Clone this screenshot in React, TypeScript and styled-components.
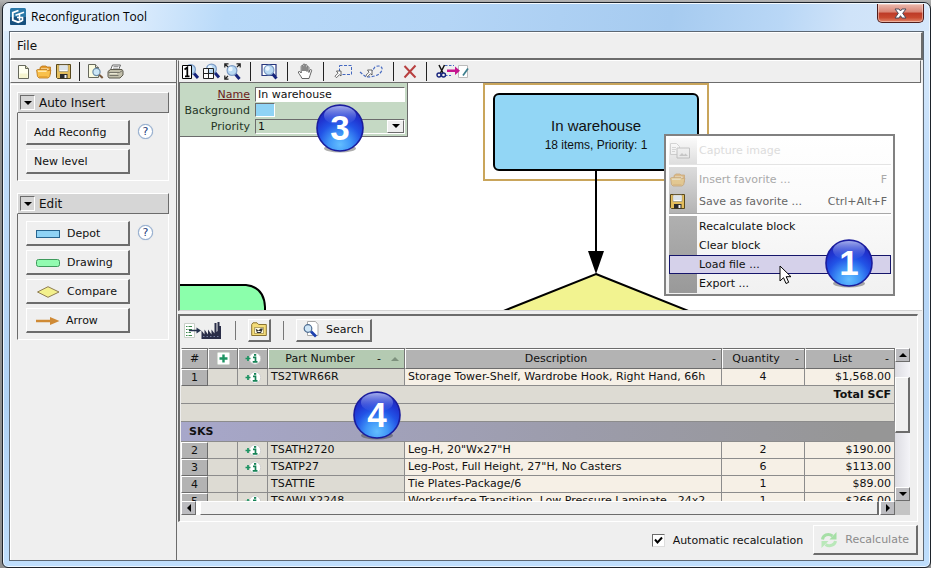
import React, { useState } from "react";
import styled, { createGlobalStyle, css } from "styled-components";

const GlobalStyle = createGlobalStyle`
  *, *::before, *::after { box-sizing: border-box; }
  body {
    margin: 0;
    background: #9c9c9c;
    font-family: "DejaVu Sans", Verdana, sans-serif;
    font-size: 11px;
    line-height: 14px;
    color: #111;
  }
  button, input, select { font: inherit; color: inherit; margin: 0; }
  svg { display: block; flex: none; }
`;

const dark = "#6c6c6c";

const raised = css`
  border: 1px solid;
  border-color: #fff ${dark} ${dark} #fff;
`;

/* ---------- window frame ---------- */

const Desktop = styled.div`
  min-height: 100vh;
  padding: 2px 0 0 2px;
  display: flex;
  background: linear-gradient(#b4b4b4, #8e8e8e 8px);
`;

const Window = styled.main`
  flex: 1;
  min-width: 0;
  display: flex;
  flex-direction: column;
  border: 1px solid #1d232b;
  border-radius: 7px 7px 6px 6px;
  background: linear-gradient(#e2effc 0, #bfdcfa 160px, #b0d2f5 400px, #bfdefc 100%);
  box-shadow: inset 0 0 0 1px #edf6ff;
  padding: 0 6px 6px;
`;

const TitleBar = styled.header`
  display: flex;
  align-items: flex-start;
  justify-content: space-between;
  height: 28px;
  margin: 0 -5px;
  padding: 0 5px 0 6px;
  border-top: 1px solid #f4faff;
  border-radius: 6px 6px 0 0;
  background: linear-gradient(100deg, #eaf4fe 0, #dcecfd 14%, #b9daf9 24%, #b4d5f6 48%, #a6cbf0 72%, #b9d7f6 84%, #cfe3f9 91%, #d5e7fb 100%);
`;

const Title = styled.h1`
  display: flex;
  align-items: center;
  gap: 5px;
  margin: 0;
  height: 25px;
  font-family: "Open Sans", "Noto Sans", sans-serif;
  font-size: 12px;
  line-height: 16px;
  font-weight: 400;
  color: #000;
`;

const CloseButton = styled.button`
  width: 47px;
  height: 19px;
  padding: 0;
  display: grid;
  place-items: center;
  border: 1px solid #4f1d1c;
  border-top: 0;
  border-radius: 0 0 5px 5px;
  background: linear-gradient(#eab9ae 0, #d98474 45%, #bd3a27 50%, #c8492f 75%, #e2876b 100%);
  box-shadow: inset 0 0 0 1px rgba(255, 225, 215, 0.5);
`;

const Client = styled.div`
  flex: 1;
  display: flex;
  flex-direction: column;
  border: 1px solid #5c6773;
  background: #efefef;
`;

const MenuBar = styled.nav`
  display: flex;
  align-items: center;
  height: 28px;
  border: 1px solid #fff;
  border-right: 2px solid ${dark};
  border-bottom: 2px solid ${dark};
`;

const MenuButton = styled.button`
  padding: 2px 6px;
  border: 0;
  background: none;
  font-size: 12px;
`;

const Columns = styled.div`
  flex: 1;
  display: flex;
`;

/* ---------- tool bars ---------- */

const ToolBar = styled.div`
  display: flex;
  align-items: center;
  gap: 4px;
  height: 23px;
  padding: 0 3px;
  ${raised}
`;

const ToolButton = styled.button<{ $width?: number }>`
  width: ${(p) => p.$width ?? 17}px;
  height: 19px;
  padding: 0;
  display: grid;
  place-items: center;
  border: 0;
  background: none;
`;

const Divider = styled.span<{ $tone?: string }>`
  width: 1px;
  height: 19px;
  margin: 0 5px;
  background: ${(p) => p.$tone ?? "#222"};
`;

/* ---------- left palette ---------- */

const Palette = styled.aside`
  width: 167px;
  flex: none;
  display: flex;
  flex-direction: column;
  border-right: 1px solid ${dark};
`;

const PaletteTools = styled(ToolBar)`
  gap: 3px;
  padding: 0 4px;
  border-right: 0;

  ${Divider} {
    margin: 0 4px;
  }
`;

const PaletteBody = styled.div`
  flex: 1;
  display: flex;
  flex-direction: column;
  gap: 12px;
  margin-top: 1px;
  padding: 7px 7px 0 6px;
  border-top: 1px solid #fff;
  border-left: 1px solid #fff;
`;

const GroupHeader = styled.div`
  display: flex;
  align-items: center;
  gap: 4px;
  height: 21px;
  padding: 0 2px;
  background: #d6d6d6;
  ${raised}
`;

const Disclosure = styled.button`
  width: 15px;
  height: 15px;
  padding: 0;
  display: grid;
  place-items: center;
  border: 1px solid;
  border-color: ${dark} #fff #fff ${dark};
  background: #d6d6d6;
`;

const GroupTitle = styled.h2`
  margin: 0;
  font-size: 12px;
  line-height: 16px;
  font-weight: 400;
`;

const GroupBody = styled.div`
  display: flex;
  align-items: flex-start;
  gap: 8px;
  padding: 7px 0 6px 8px;
  border: 1px solid;
  border-color: transparent #fff #fff ${dark};
  border-top: 0;
`;

const ButtonStack = styled.div`
  width: 104px;
  display: flex;
  flex-direction: column;
  gap: 4px;
`;

const PaletteButton = styled.button<{ $indent?: number }>`
  display: flex;
  align-items: center;
  gap: 6px;
  height: 25px;
  padding: 2px 0 0 ${(p) => p.$indent ?? 7}px;
  border: 1px solid;
  border-width: 1px 2px 2px 1px;
  border-color: #fff ${dark} ${dark} #fff;
  background: #efefef;
  white-space: nowrap;
`;

const HelpButton = styled.button`
  width: 15px;
  height: 15px;
  margin-top: 4px;
  padding: 0;
  border: 1px solid #8fa9cb;
  border-radius: 50%;
  background: #fff;
  box-shadow: 0 0 1px #9db4d2;
  font-size: 11px;
  line-height: 12px;
  color: #1c3d7a;
`;

/* ---------- right side ---------- */

const Workspace = styled.section`
  flex: 1;
  min-width: 0;
  display: flex;
  flex-direction: column;
  padding-left: 1px;
`;

const CanvasTools = styled(ToolBar)`
  margin-right: 2px;
  border-left: 1px solid ${dark};
`;

const Canvas = styled.div`
  position: relative;
  flex: 1;
  min-height: 227px;
  margin-right: 1px;
  overflow: hidden;
  border-left: 2px solid ${dark};
  border-bottom: 1px solid #d4d4d4;
  background: #fff;
`;

const Drawing = styled.svg`
  position: absolute;
  left: 0;
  top: 0;
`;

const Block = styled.div`
  position: absolute;
  left: 303px;
  top: 0;
  width: 226px;
  height: 98px;
  padding: 8px;
  border: 2px solid #c9a55b;
`;

const BlockFace = styled.div`
  height: 78px;
  display: flex;
  flex-direction: column;
  align-items: center;
  justify-content: center;
  gap: 3px;
  padding-top: 4px;
  border: 2px solid #000;
  border-radius: 6px;
  background: #92d6f5;
  font-family: "Liberation Sans", Arial, sans-serif;
  font-size: 12px;
`;

const BlockName = styled.strong`
  font-size: 15px;
  line-height: 18px;
  font-weight: 400;
`;

const Properties = styled.form`
  position: absolute;
  left: 0;
  top: 0;
  width: 228px;
  display: grid;
  grid-template-columns: 70px 1fr;
  grid-auto-rows: 16px;
  column-gap: 5px;
  align-items: center;
  padding: 3px 2px 2px 0;
  border-right: 1px solid ${dark};
  border-bottom: 1px solid ${dark};
  background: #c5d9c4;
`;

const PropertyLabel = styled.label<{ $active?: boolean }>`
  padding-top: 2px;
  text-align: right;
  white-space: nowrap;
  color: ${(p) => (p.$active ? "#6b1c1c" : "#243524")};
  text-decoration: ${(p) => (p.$active ? "underline" : "none")};
`;

const field = css`
  width: 100%;
  height: 15px;
  padding: 0 2px;
  border: 1px solid;
  border-color: ${dark} #fff #fff ${dark};
  border-radius: 0;
  outline: 0;
`;

const TextField = styled.input`
  ${field}
  background: #fff;
`;

const Swatch = styled.button`
  width: 20px;
  height: 14px;
  padding: 0;
  border: 1px solid;
  border-color: ${dark} #fff #fff ${dark};
  background: #8fd3f5;
`;

const SelectFrame = styled.div`
  display: grid;
  grid-template-columns: 1fr 18px;
  align-items: center;
`;

const Select = styled.select`
  ${field}
  grid-area: 1 / 1 / 2 / 3;
  appearance: none;
  background: #c5d9c4;
`;

const SelectArrow = styled.span`
  grid-area: 1 / 2;
  width: 17px;
  height: 13px;
  display: grid;
  place-items: center;
  background: #efefef;
  pointer-events: none;
  ${raised}
`;

const BadgeSpot = styled.span<{ $left: number; $top: number }>`
  position: absolute;
  left: ${(p) => p.$left}px;
  top: ${(p) => p.$top}px;
  pointer-events: none;
`;

const CursorSpot = styled.span`
  position: absolute;
  left: 113px;
  top: 129px;
  pointer-events: none;
`;

/* ---------- context menu ---------- */

const ContextMenu = styled.div`
  position: absolute;
  left: 484px;
  top: 51px;
  width: 231px;
  padding: 2px 2px 1px 3px;
  border: 2px solid #818181;
  background: linear-gradient(#fff 0, #fbfbfb 40%, #f1f1f1 100%);
`;

const MenuSection = styled.div<{ $from: string; $to: string; $padTop?: number; $padBottom?: number }>`
  padding: ${(p) => p.$padTop ?? 0}px 0 ${(p) => p.$padBottom ?? 0}px;
  background: linear-gradient(${(p) => p.$from}, ${(p) => p.$to}) 0 0 / 28px 100% no-repeat;
`;

const MenuRule = styled.hr<{ $tone: string }>`
  height: 3px;
  margin: 0;
  border: 0;
  border-top: 1px solid ${(p) => p.$tone};
  background: #fff;
`;

const MenuItem = styled.button<{ $tone?: string; $height?: number; $active?: boolean }>`
  width: 100%;
  height: ${(p) => p.$height ?? 19}px;
  display: grid;
  grid-template-columns: 29px 1fr auto;
  align-items: center;
  padding: 0 3px 0 0;
  border: 1px solid ${(p) => (p.$active ? "#15156b" : "transparent")};
  background: ${(p) => (p.$active ? "#d5d1ea" : "none")};
  color: ${(p) => p.$tone ?? "#111"};
  text-align: left;
  white-space: nowrap;
`;

/* ---------- parts list ---------- */

const PartsPanel = styled.div`
  margin: 3px 5px 0 0;
  padding: 0 7px 6px 1px;
  border: 2px solid ${dark};
  border-right: 1px solid #fff;
  border-bottom: 1px solid #fff;
`;

const PartsTools = styled.div`
  display: flex;
  align-items: center;
  height: 32px;
  padding: 0 2px 4px;
`;

const PartsDivider = styled(Divider)`
  margin: 0 12px;
`;

const PartsButton = styled.button`
  height: 23px;
  display: flex;
  align-items: center;
  gap: 7px;
  padding: 0 2px;
  border: 1px solid;
  border-width: 1px 2px 2px 1px;
  border-color: #fff ${dark} ${dark} #fff;
  background: #efefef;
`;

const SearchButton = styled(PartsButton)`
  padding: 0 6px;
`;

const ListFrame = styled.div`
  display: grid;
  grid-template-columns: minmax(0, 1fr) 15px;
  grid-template-rows: 153px 14px;
`;

const Viewport = styled.div`
  overflow: hidden;
`;

const Table = styled.table`
  width: 100%;
  table-layout: fixed;
  border-collapse: separate;
  border-spacing: 0;
`;

const Col = styled.col<{ $width?: number }>`
  width: ${(p) => (p.$width ? `${p.$width}px` : "auto")};
`;

const HeadCell = styled.th<{ $sorted?: boolean }>`
  height: 21px;
  padding: 0;
  border: 1px solid;
  border-color: ${dark} #777 ${dark} #fff;
  box-shadow: inset 0 1px 0 #fff;
  background: ${(p) => (p.$sorted ? "#b4cab2" : "#b3b3b3")};
  font-weight: 400;
`;

const HeadLabel = styled.div`
  display: grid;
  grid-template-columns: 1fr auto;
  column-gap: 6px;
  align-items: center;
  padding-right: 5px;
`;

const SortMark = styled.span`
  display: flex;
  align-items: center;
  gap: 10px;
`;

const Cell = styled.td<{ $kind?: "number" | "plain" | "value"; $align?: string }>`
  height: 17px;
  padding: 0 3px;
  border-right: 1px solid #8c8c8c;
  border-bottom: 1px solid #8c8c8c;
  text-align: ${(p) => p.$align ?? "left"};
  background: ${(p) => (p.$kind === "number" ? "#b3b3b3" : p.$kind === "value" ? "#f6f0e6" : "#dddbd3")};
  ${(p) =>
    p.$kind === "number" &&
    css`
      border: 1px solid;
      border-color: #fff ${dark} ${dark} #fff;
    `}
`;

const Clip = styled.div`
  overflow: hidden;
  white-space: nowrap;
`;

const Centered = styled.div`
  display: grid;
  justify-items: center;
`;

const TotalCell = styled.td`
  height: 18px;
  padding: 0 3px;
  border-right: 1px solid #8c8c8c;
  border-bottom: 1px solid #8c8c8c;
  background: #dddbd3;
  text-align: right;
  font-weight: 700;
`;

const GroupCell = styled.th`
  height: 20px;
  padding: 0 8px;
  border-bottom: 1px solid #8c8c8c;
  background: linear-gradient(90deg, #a7a7ca, #9c9cab 55%, #969696 95%);
  text-align: left;
  font-weight: 700;
`;

const VScroll = styled.div`
  display: flex;
  flex-direction: column;
  background: linear-gradient(90deg, #dcdce2, #f4f4f8);
`;

const HScroll = styled.div`
  display: flex;
  background: #fff;
`;

const ScrollArrow = styled.button`
  width: 15px;
  height: 14px;
  flex: none;
  padding: 0;
  display: grid;
  place-items: center;
  background: #bcbcc0;
  ${raised}
`;

const VThumb = styled.div`
  height: 56px;
  margin: 15px 0 auto;
  background: #efefef;
  border-style: solid;
  border-width: 1px 2px 2px 1px;
  border-color: #fff ${dark} ${dark} #fff;
`;

const HThumb = styled.div`
  flex: 1;
  margin: 0 1px 0 4px;
  background: #efefef;
  border-style: solid;
  border-width: 1px 2px 1px 1px;
  border-color: #fff ${dark} ${dark} #fff;
`;

const Corner = styled.div`
  background: #c4c4c4;
`;

/* ---------- footer ---------- */

const Footer = styled.footer`
  display: flex;
  align-items: center;
  justify-content: flex-end;
  gap: 8px;
  height: 38px;
  padding: 0 5px 2px 0;
`;

const FooterLabel = styled.label`
  padding: 2px 2px 0 0;
`;

const CheckFrame = styled.span`
  display: grid;
  place-items: center;
`;

const CheckBox = styled.input`
  grid-area: 1 / 1;
  appearance: none;
  width: 13px;
  height: 13px;
  border: 1px solid;
  border-color: ${dark} #ddd #ddd ${dark};
  background: #fff;
`;

const CheckMark = styled.svg`
  grid-area: 1 / 1;
  pointer-events: none;
`;

const RecalcButton = styled(PartsButton)`
  height: 30px;
  padding: 0 7px 0 6px;
  color: #8b8b8b;
`;

/* ---------- icons ---------- */

const Logo = () => (
  <svg width="16" height="17" viewBox="0 0 16 17">
    <rect width="16" height="17" rx="1.5" fill="#2a78a8" />
    <path d="M0 9h16v6.500a1.500 1.500 0 0 1-1.500 1.500h-13A1.500 1.500 0 0 1 0 15.500z" fill="#17507e" />
    <path d="M8.500 2.500 2.800 4.600v7.600l5.400 2 4-1.600" fill="none" stroke="#fff" strokeWidth="1.800" />
    <path d="M5.500 7.200 14 4.200M9.500 6v6.500M7 9.500h5.500v3.500" fill="none" stroke="#fff" strokeWidth="1.600" />
  </svg>
);

const CloseGlyph = () => (
  <svg width="13" height="11" viewBox="0 0 13 11">
    <path d="M1 1h4l1.500 2L8 1h4L8.700 5.300 12 10H8L6.500 7.700 5 10H1l3.300-4.700z" fill="#fff" stroke="#4a4a5a" />
  </svg>
);

const DocIcon = () => (
  <svg width="11" height="14" viewBox="0 0 11 14">
    <path d="M.5.5h7l3 3v10H.5z" fill="#fffff0" stroke="#66685c" />
    <path d="M1.500 8.500h8V13h-8z" fill="#f5f4cf" />
    <path d="M7.500.500v3h3" fill="#d8d8b0" stroke="#66685c" />
  </svg>
);

const FolderIcon = ({ faded }: { faded?: boolean }) => (
  <svg width="16" height="14" viewBox="0 0 16 14" opacity={faded ? 0.45 : 1}>
    <path d="M4 2.500 6 1h4l1 1h3.500V9L11 11H4z" fill="#e79c2c" stroke="#b97518" strokeWidth=".8" />
    <path d="M5 3.500h7.500V6H5z" fill="#fff6d4" />
    <path d="M.600 5 1.500 4.500H11l.8 1.200L14.800 5l-1 6.500L12 13H3L1.500 11.500z" fill="#f9c04a" stroke="#b97518" strokeWidth=".8" />
    <path d="M2 6.300h8.500" stroke="#ffe9ae" strokeWidth="1.400" />
    <path d="M3 11.800h8.500" stroke="#e29a2c" />
  </svg>
);

const SaveIcon = () => (
  <svg width="15" height="15" viewBox="0 0 15 15">
    <path d="M.5.5h14v14h-13l-1-1z" fill="#e3bd5c" stroke="#57481d" />
    <path d="M3 1h9v6.500H3z" fill="#fff" stroke="#8a8674" strokeWidth=".6" />
    <path d="M4 3h7M4 5h7" stroke="#b9c9d6" />
    <path d="M4 10h7.500v4.500H4z" fill="#2b2b2b" />
    <path d="M8.500 11h2v3h-2z" fill="#f3f3f3" />
  </svg>
);

const PreviewIcon = () => (
  <svg width="17" height="15" viewBox="0 0 17 15">
    <path d="M1.500.5h7l3 3v10h-10z" fill="#fbfbe0" stroke="#66685c" />
    <path d="M8.500.500v3h3" fill="#ddd" stroke="#66685c" />
    <circle cx="9.500" cy="8" r="3.600" fill="#cbe6f6" stroke="#6d8ea9" strokeWidth="1.200" />
    <path d="M12.200 10.700 15.700 14" stroke="#76583c" strokeWidth="2" />
  </svg>
);

const PrinterIcon = () => (
  <svg width="17" height="15" viewBox="0 0 17 15">
    <path d="M5.500 1h8l-2 5h-8z" fill="#fff" stroke="#666" />
    <path d="M6.500 2.500h5M6 4.200h5" stroke="#999" />
    <path d="M1 7.500 3.500 5.500H15l1 1.500v4l-3 3H2l-1-1.500z" fill="#c2bfab" stroke="#5d5b4e" />
    <path d="M1.500 8.500h11l3-2M2.500 11.500h9" fill="none" stroke="#77756a" />
    <path d="M3 9.700h7" stroke="#f3f1de" />
  </svg>
);

const Lens = ({ cx = 8, cy = 6 }: { cx?: number; cy?: number }) => (
  <>
    <path d={`M${cx + 3.2} ${cy + 3.6} L${cx + 7.5} ${cy + 8.5}`} stroke="#17247c" strokeWidth="3" />
    <circle cx={cx} cy={cy} r="4.900" fill="#b9d9f3" stroke="#7d9cc6" strokeWidth="1.200" />
    <circle cx={cx - 1.5} cy={cy - 1.5} r="2.200" fill="#ebf7ff" />
  </>
);

const ZoomOneIcon = () => (
  <svg width="17" height="17" viewBox="0 0 17 17">
    <Lens cx={8.5} cy={6.5} />
    <path d="M.5 2.500h9v13h-9z" fill="#fff" stroke="#000" />
    <path d="M2.500 6.500 5.300 4.500v9M3 13.300h4.500" fill="none" stroke="#000" strokeWidth="1.700" />
  </svg>
);

const ZoomSplitIcon = () => (
  <svg width="17" height="17" viewBox="0 0 17 17">
    <Lens cx={8.5} cy={6} />
    <path d="M1 11h4v4H1zM6 11h4v4H6zM1 6h4v4H1z" fill="#fff" fillOpacity=".85" />
    <path d="M.5 5.500h10v10H.5zM5.500 5.500v10M.500 10.500h10" fill="none" stroke="#222" />
  </svg>
);

const ZoomFitIcon = () => (
  <svg width="17" height="17" viewBox="0 0 17 17">
    <Lens cx={8} cy={7.5} />
    <path d="M.8 4.500V.8h3.700M12.500.8h3.700v3.700M.8 12.500v3.700h3.700M1 1l3 3M16 1l-3 3M1 16l3-3" fill="none" stroke="#222" strokeWidth="1.200" />
  </svg>
);

const ZoomAreaIcon = () => (
  <svg width="17" height="17" viewBox="0 0 17 17">
    <path d="M1 1.500h14v11H1z" fill="#fff" stroke="#26357c" strokeWidth="1.200" />
    <Lens cx={8} cy={7} />
  </svg>
);

const HandIcon = () => (
  <svg width="17" height="17" viewBox="0 0 17 17">
    <path
      d="M5 15.500C4 13 1.500 10.500 1.300 9c.4-1 1.700-.7 2.900 1V3.500c.1-1.300 1.600-1.300 1.800 0V8 2c.2-1.400 1.900-1.400 2 0v6-5.500c.2-1.300 1.800-1.300 2 0V8.500 4.500c.2-1.200 1.700-1.200 1.900 0v5l1-2.500c.8-1 2-.4 1.700.7L13 12.500l-1 3z"
      fill="#fff"
      stroke="#555"
      strokeWidth=".9"
    />
  </svg>
);

const SmallPointer = ({ x, y }: { x: number; y: number }) => (
  <path d={`M${x + 6} ${y}v5l-1.500-1.300-3 3-1.500-1.500 3-3L${x + 1.5} ${y}z`} fill="#fff" stroke="#444" strokeWidth=".8" />
);

const MarqueeIcon = () => (
  <svg width="19" height="17" viewBox="0 0 19 17">
    <path d="M5.500 2.500h12v9h-12z" fill="none" stroke="#4468c0" strokeDasharray="3 1.500" />
    <SmallPointer x={1} y={8} />
  </svg>
);

const LassoIcon = () => (
  <svg width="26" height="17" viewBox="0 0 26 17">
    <path d="M2 9l6 5c6 0 14-1 16-7 1-4-4-5-7-3l-3 4" fill="none" stroke="#4468c0" strokeWidth="1.200" strokeDasharray="3 1.500" />
    <SmallPointer x={8} y={7} />
  </svg>
);

const DeleteIcon = () => (
  <svg width="14" height="15" viewBox="0 0 14 15">
    <path d="M1.500 2 12.500 13.500M12.500 1.500 1.500 13.500" stroke="#b84040" strokeWidth="2" />
  </svg>
);

const CutPasteIcon = () => (
  <svg width="33" height="17" viewBox="0 0 33 17">
    <path d="M9 2.500h9M9 12.500h6" stroke="#4468c0" strokeDasharray="2.500 1.500" />
    <path d="M22.500 2.500h9v12h-9z" fill="#fff" stroke="#bbb" />
    <path d="M27 12.500 32 5.500" stroke="#3b7e8d" strokeWidth="1.700" />
    <path d="M3 2 7 10M8.500 2 4.500 10" stroke="#111" strokeWidth="1.500" />
    <circle cx="3" cy="12" r="2" fill="none" stroke="#17247c" strokeWidth="1.400" />
    <circle cx="7.500" cy="12" r="2" fill="none" stroke="#17247c" strokeWidth="1.400" />
    <path d="M11 6.500h8V3.500l5 4.200-5 4.300V9h-8z" fill="#c5168f" />
  </svg>
);

const Triangle = ({ dir, tone = "#000" }: { dir: "up" | "down" | "left" | "right"; tone?: string }) => {
  const shapes = {
    up: "M0 6 4 2l4 4z",
    down: "M0 2h8L4 6z",
    left: "M6 0v8L2 4z",
    right: "M2 0l4 4-4 4z",
  };
  return (
    <svg width="8" height="8" viewBox="0 0 8 8">
      <path d={shapes[dir]} fill={tone} />
    </svg>
  );
};

const DepotIcon = () => (
  <svg width="25" height="9" viewBox="0 0 25 9">
    <rect x=".5" y=".5" width="23" height="7" fill="#8fd3f5" stroke="#27648e" />
  </svg>
);

const DrawingIcon = () => (
  <svg width="25" height="9" viewBox="0 0 25 9">
    <rect x=".5" y=".5" width="23" height="7" rx="2" fill="#92fbb0" stroke="#3f9a5c" />
  </svg>
);

const CompareIcon = () => (
  <svg width="25" height="13" viewBox="0 0 25 13">
    <path d="M1.500 6 12 .7 23 6l-11 5.300z" fill="#f3f08c" stroke="#8f7d52" />
  </svg>
);

const ArrowIcon = () => (
  <svg width="24" height="9" viewBox="0 0 24 9">
    <path d="M0 2.700h14V0L23.500 4 14 8V5.300H0z" fill="#cf8a35" />
  </svg>
);

const FactoryIcon = () => (
  <svg width="40" height="19" viewBox="0 0 40 19">
    <path d="M1.500 2.500h10v14h-10z" fill="#fff" stroke="#c8cfc8" />
    <path d="M3 5.500h6M3 8.500h6M3 11.500h5M3 14.500h6" stroke="#3d8b4d" strokeWidth="1.200" strokeDasharray="1.500 1 4 1" />
    <path d="M6 9.500h9" stroke="#26334f" strokeWidth="1.500" />
    <path d="M13.500 6.500 18 9.500l-4.500 3z" fill="#26334f" />
    <path d="M18.500 18V9.500l3 4v-5l3.500 5v-5l3.500 5v-5l3 4V2h2v9l1-1V1h2v4h1.500v13z" fill="#2a2e48" />
    <path d="M20 15.500h17" stroke="#777fa0" strokeDasharray="1.500 2" />
  </svg>
);

const FolderPictureIcon = () => (
  <svg width="16" height="15" viewBox="0 0 16 15">
    <path d="M.7 2.500 2 .800h4l1.500 1.700h7.800v11H.7z" fill="#f4dc78" stroke="#8a7330" />
    <path d="M3.500 5.500h9v6h-9z" fill="#fffbe0" stroke="#8a7330" strokeWidth=".6" />
    <path d="M4.500 6.500l3 2 2-2h2.500l-2 4.500H6z" fill="#333" />
    <path d="M6.500 9.500h3" stroke="#fff" />
  </svg>
);

const SearchIcon = () => (
  <svg width="16" height="17" viewBox="0 0 16 17">
    <path d="M4.500.500h8l2.500 3v11H4.500z" fill="#fff" stroke="#a8a8a8" />
    <circle cx="5" cy="7.500" r="3.800" fill="#cfe6f7" stroke="#4d6b8f" strokeWidth="1.200" />
    <path d="M8 10.500 13 15.500" stroke="#1c3fae" strokeWidth="2.800" />
  </svg>
);

const PlusIcon = () => (
  <svg width="13" height="13" viewBox="0 0 13 13">
    <rect x=".5" y=".5" width="12" height="12" rx="1" fill="#fff" stroke="#d5dfd5" />
    <path d="M6.500 2.500v8M2.500 6.500h8" stroke="#1d9462" strokeWidth="2.400" />
  </svg>
);

const InfoIcon = () => (
  <svg width="16" height="13" viewBox="0 0 16 13">
    <circle cx="10" cy="6.500" r="5.700" fill="#fff" stroke="#c8c8c8" strokeWidth=".8" />
    <path d="M3 4v5M.5 6.500h5" stroke="#1d9462" strokeWidth="1.700" />
    <path d="M8 5.300h2.500v4.500M7.700 9.800h4.800" fill="none" stroke="#168356" strokeWidth="1.700" />
    <rect x="9" y="2" width="2.200" height="1.800" fill="#168356" />
  </svg>
);

const CaptureIcon = () => (
  <svg width="20" height="16" viewBox="0 0 20 16" opacity=".35">
    <path d="M.5.500h6l3 3v8h-9z" fill="#fff" stroke="#999" />
    <path d="M2 4.500h4M2 6.500h4M2 8.500h3" stroke="#aaa" />
    <path d="M7 5h12.500v10H7z" fill="#eee" stroke="#777" />
    <path d="M9 13l3-3 2 2 1.500-1.500L18 13z" fill="#888" />
  </svg>
);

const RefreshIcon = () => (
  <svg width="18" height="18" viewBox="0 0 18 18">
    <path d="M2.500 8.500C3 4.500 8 1.500 12.500 5" fill="none" stroke="#a6dfa6" strokeWidth="3" />
    <path d="M16.500 1v7.500H9.500z" fill="#a6dfa6" />
    <path d="M15.500 10C15 13.500 10 16.500 5.500 13.500" fill="none" stroke="#b9e8b9" strokeWidth="3" />
    <path d="M1.500 17V10h7z" fill="#b9e8b9" />
  </svg>
);

const Pointer = () => (
  <svg width="13" height="20" viewBox="0 0 13 20">
    <path d="M1 1v15l3.500-3.300 2.500 5.800 2.700-1.200-2.500-5.600H12z" fill="#fff" stroke="#000" />
  </svg>
);

const Badge = ({ digit }: { digit: string }) => (
  <svg width="48" height="50" viewBox="0 0 48 50">
    <defs>
      <radialGradient id={`ball${digit}`} cx=".5" cy=".86" r=".86">
        <stop offset="0" stopColor="#62bdff" />
        <stop offset=".28" stopColor="#4096f8" />
        <stop offset=".55" stopColor="#2253e6" />
        <stop offset=".75" stopColor="#2036d2" />
        <stop offset="1" stopColor="#2127b4" />
      </radialGradient>
      <linearGradient id={`gloss${digit}`} x1="0" y1="0" x2="0" y2="1">
        <stop offset="0" stopColor="#c3cdf8" stopOpacity=".8" />
        <stop offset="1" stopColor="#4a66e6" stopOpacity=".1" />
      </linearGradient>
    </defs>
    <ellipse cx="24" cy="44.500" rx="16" ry="4" fill="#333" opacity=".4" />
    <circle cx="24" cy="24" r="23" fill={`url(#ball${digit})`} stroke="#1a1c9c" strokeWidth="1.600" />
    <ellipse cx="24" cy="11.500" rx="16" ry="9.500" fill={`url(#gloss${digit})`} />
    <text x="24" y="36" textAnchor="middle" fill="#fff" fontFamily="Liberation Sans, Arial, sans-serif" fontWeight="700" fontSize="35">
      {digit}
    </text>
  </svg>
);

/* ---------- data ---------- */

type Part = { no: number; info: boolean; part: string; text: string; qty: number; price: string };

const storage: Part[] = [
  { no: 1, info: true, part: "TS2TWR66R", text: "Storage Tower-Shelf, Wardrobe Hook, Right Hand, 66h", qty: 4, price: "$1,568.00" },
];

const sks: Part[] = [
  { no: 2, info: true, part: "TSATH2720", text: 'Leg-H, 20"Wx27"H', qty: 2, price: "$190.00" },
  { no: 3, info: true, part: "TSATP27", text: 'Leg-Post, Full Height, 27"H, No Casters', qty: 6, price: "$113.00" },
  { no: 4, info: false, part: "TSATTIE", text: "Tie Plates-Package/6", qty: 1, price: "$89.00" },
  { no: 5, info: true, part: "TSAWLX2248", text: "Worksurface-Transition, Low Pressure Laminate - 24x2", qty: 1, price: "$266.00" },
];

const PartRow = ({ item }: { item: Part }) => (
  <tr>
    <Cell $kind="number" $align="center">{item.no}</Cell>
    <Cell />
    <Cell>
      <Centered>{item.info && <InfoIcon />}</Centered>
    </Cell>
    <Cell>{item.part}</Cell>
    <Cell $kind="value">
      <Clip>{item.text}</Clip>
    </Cell>
    <Cell $kind="value" $align="center">{item.qty}</Cell>
    <Cell $kind="value" $align="right">{item.price}</Cell>
  </tr>
);

const PartsTable = () => (
  <Table>
    <colgroup>
      <Col $width={27} />
      <Col $width={30} />
      <Col $width={30} />
      <Col $width={137} />
      <Col />
      <Col $width={83} />
      <Col $width={90} />
    </colgroup>
    <thead>
      <tr>
        <HeadCell>#</HeadCell>
        <HeadCell aria-label="Add"><Centered><PlusIcon /></Centered></HeadCell>
        <HeadCell aria-label="Info"><Centered><InfoIcon /></Centered></HeadCell>
        <HeadCell $sorted>
          <HeadLabel>
            Part Number
            <SortMark>-<Triangle dir="up" tone="#7d917d" /></SortMark>
          </HeadLabel>
        </HeadCell>
        <HeadCell><HeadLabel>Description<span>-</span></HeadLabel></HeadCell>
        <HeadCell><HeadLabel>Quantity<span>-</span></HeadLabel></HeadCell>
        <HeadCell><HeadLabel>List<span>-</span></HeadLabel></HeadCell>
      </tr>
    </thead>
    <tbody>
      {storage.map((item) => <PartRow key={item.no} item={item} />)}
      <tr><TotalCell colSpan={7}>Total SCF</TotalCell></tr>
      <tr><TotalCell colSpan={7} /></tr>
      <tr><GroupCell colSpan={7}>SKS</GroupCell></tr>
      {sks.map((item) => <PartRow key={item.no} item={item} />)}
    </tbody>
  </Table>
);

const PartsBadgeAnchor = styled.div`
  position: relative;
  height: 0;
`;

const PartsBadge = () => (
  <PartsBadgeAnchor>
    <BadgeSpot $left={172} $top={-124}><Badge digit="4" /></BadgeSpot>
  </PartsBadgeAnchor>
);

/* ---------- application ---------- */

export default function App() {
  const [name, setName] = useState("In warehouse");
  const [auto, setAuto] = useState(true);

  return (
    <>
      <GlobalStyle />
      <Desktop>
        <Window>
          <TitleBar>
            <Title><Logo />Reconfiguration Tool</Title>
            <CloseButton aria-label="Close"><CloseGlyph /></CloseButton>
          </TitleBar>
          <Client>
            <MenuBar><MenuButton>File</MenuButton></MenuBar>
            <Columns>
              <Palette>
                <PaletteTools>
                  <ToolButton aria-label="New"><DocIcon /></ToolButton>
                  <ToolButton aria-label="Open"><FolderIcon /></ToolButton>
                  <ToolButton aria-label="Save"><SaveIcon /></ToolButton>
                  <Divider />
                  <ToolButton aria-label="Print preview"><PreviewIcon /></ToolButton>
                  <ToolButton aria-label="Print"><PrinterIcon /></ToolButton>
                </PaletteTools>
                <PaletteBody>
                  <section>
                    <GroupHeader>
                      <Disclosure aria-label="Toggle Auto Insert"><Triangle dir="down" /></Disclosure>
                      <GroupTitle>Auto Insert</GroupTitle>
                    </GroupHeader>
                    <GroupBody>
                      <ButtonStack>
                        <PaletteButton>Add Reconfig</PaletteButton>
                        <PaletteButton>New level</PaletteButton>
                      </ButtonStack>
                      <HelpButton>?</HelpButton>
                    </GroupBody>
                  </section>
                  <section>
                    <GroupHeader>
                      <Disclosure aria-label="Toggle Edit"><Triangle dir="down" /></Disclosure>
                      <GroupTitle>Edit</GroupTitle>
                    </GroupHeader>
                    <GroupBody>
                      <ButtonStack>
                        <PaletteButton $indent={9}><DepotIcon />Depot</PaletteButton>
                        <PaletteButton $indent={9}><DrawingIcon />Drawing</PaletteButton>
                        <PaletteButton $indent={9}><CompareIcon />Compare</PaletteButton>
                        <PaletteButton $indent={9}><ArrowIcon />Arrow</PaletteButton>
                      </ButtonStack>
                      <HelpButton>?</HelpButton>
                    </GroupBody>
                  </section>
                </PaletteBody>
              </Palette>

              <Workspace>
                <CanvasTools>
                  <ToolButton aria-label="Actual size"><ZoomOneIcon /></ToolButton>
                  <ToolButton aria-label="Zoom grid"><ZoomSplitIcon /></ToolButton>
                  <ToolButton aria-label="Zoom to fit"><ZoomFitIcon /></ToolButton>
                  <Divider />
                  <ToolButton aria-label="Zoom area" $width={18}><ZoomAreaIcon /></ToolButton>
                  <Divider />
                  <ToolButton aria-label="Pan"><HandIcon /></ToolButton>
                  <Divider />
                  <ToolButton aria-label="Select rectangle" $width={21}><MarqueeIcon /></ToolButton>
                  <ToolButton aria-label="Select lasso" $width={26}><LassoIcon /></ToolButton>
                  <Divider />
                  <ToolButton aria-label="Delete" $width={14}><DeleteIcon /></ToolButton>
                  <Divider />
                  <ToolButton aria-label="Cut to drawing" $width={33}><CutPasteIcon /></ToolButton>
                </CanvasTools>

                <Canvas>
                  <Drawing width="741" height="260" viewBox="0 0 741 260">
                    <path d="M-4 202H66Q84 204 85 224V270H-4z" fill="#8bffab" stroke="#000" strokeWidth="2" />
                    <path d="M416 191 541 241 416 291 291 241z" fill="#f2f390" stroke="#000" strokeWidth="2" />
                  </Drawing>
                  <Block>
                    <BlockFace>
                      <BlockName>In warehouse</BlockName>
                      18 items, Priority: 1
                    </BlockFace>
                  </Block>
                  <Drawing width="741" height="200" viewBox="0 0 741 200">
                    <path d="M416 88V170" stroke="#000" strokeWidth="2" />
                    <path d="M408 168h16l-8 23z" />
                  </Drawing>

                  <Properties>
                    <PropertyLabel htmlFor="name" $active>Name</PropertyLabel>
                    <TextField id="name" value={name} onChange={(e) => setName(e.target.value)} />
                    <PropertyLabel htmlFor="background">Background</PropertyLabel>
                    <Swatch id="background" type="button" />
                    <PropertyLabel htmlFor="priority">Priority</PropertyLabel>
                    <SelectFrame>
                      <Select id="priority" defaultValue="1">
                        <option>1</option>
                        <option>2</option>
                        <option>3</option>
                      </Select>
                      <SelectArrow><Triangle dir="down" /></SelectArrow>
                    </SelectFrame>
                  </Properties>
                  <BadgeSpot $left={136} $top={21}><Badge digit="3" /></BadgeSpot>

                  <ContextMenu>
                    <MenuSection $from="#fafafa" $to="#dedede">
                      <MenuItem $height={26} $tone="#dcdcdc"><CaptureIcon />Capture image</MenuItem>
                    </MenuSection>
                    <MenuRule $tone="#e4e4e4" />
                    <MenuSection $from="#dcdcdc" $to="#b4b4b4" $padTop={1} $padBottom={1}>
                      <MenuItem $height={23} $tone="#a9a9a9"><FolderIcon faded />Insert favorite ...<span>F</span></MenuItem>
                      <MenuItem $height={21} $tone="#666"><SaveIcon />Save as favorite ...<span>Ctrl+Alt+F</span></MenuItem>
                    </MenuSection>
                    <MenuRule $tone="#a8a8a8" />
                    <MenuSection $from="#b0b0b0" $to="#999" $padTop={1}>
                      <MenuItem><span />Recalculate block</MenuItem>
                      <MenuItem><span />Clear block</MenuItem>
                      <MenuItem $active><span />Load file ...</MenuItem>
                      <MenuItem><span />Export ...</MenuItem>
                    </MenuSection>
                    <CursorSpot><Pointer /></CursorSpot>
                  </ContextMenu>
                  <BadgeSpot $left={645} $top={156}><Badge digit="1" /></BadgeSpot>
                </Canvas>

                <PartsPanel>
                  <PartsTools>
                    <ToolButton aria-label="Send to factory" $width={40}><FactoryIcon /></ToolButton>
                    <PartsDivider $tone="#777" />
                    <PartsButton aria-label="Favorites"><FolderPictureIcon /></PartsButton>
                    <PartsDivider $tone="#777" />
                    <SearchButton><SearchIcon />Search</SearchButton>
                  </PartsTools>
                  <ListFrame>
                    <Viewport><PartsTable /></Viewport>
                    <VScroll>
                      <ScrollArrow aria-label="Scroll up"><Triangle dir="up" /></ScrollArrow>
                      <VThumb />
                      <ScrollArrow aria-label="Scroll down"><Triangle dir="down" /></ScrollArrow>
                    </VScroll>
                    <HScroll>
                      <ScrollArrow aria-label="Scroll left"><Triangle dir="left" /></ScrollArrow>
                      <HThumb />
                      <ScrollArrow aria-label="Scroll right"><Triangle dir="right" /></ScrollArrow>
                    </HScroll>
                    <Corner />
                  </ListFrame>
                  <PartsBadge />
                </PartsPanel>

                <Footer>
                  <CheckFrame>
                    <CheckBox id="auto" type="checkbox" checked={auto} onChange={() => setAuto(!auto)} />
                    {auto && (
                      <CheckMark width="9" height="9" viewBox="0 0 9 9">
                        <path d="M1 3.500 3.500 6.500 8 1.500" fill="none" stroke="#000" strokeWidth="2" />
                      </CheckMark>
                    )}
                  </CheckFrame>
                  <FooterLabel htmlFor="auto">Automatic recalculation</FooterLabel>
                  <RecalcButton disabled><RefreshIcon />Recalculate</RecalcButton>
                </Footer>
              </Workspace>
            </Columns>
          </Client>
        </Window>
      </Desktop>
    </>
  );
}
